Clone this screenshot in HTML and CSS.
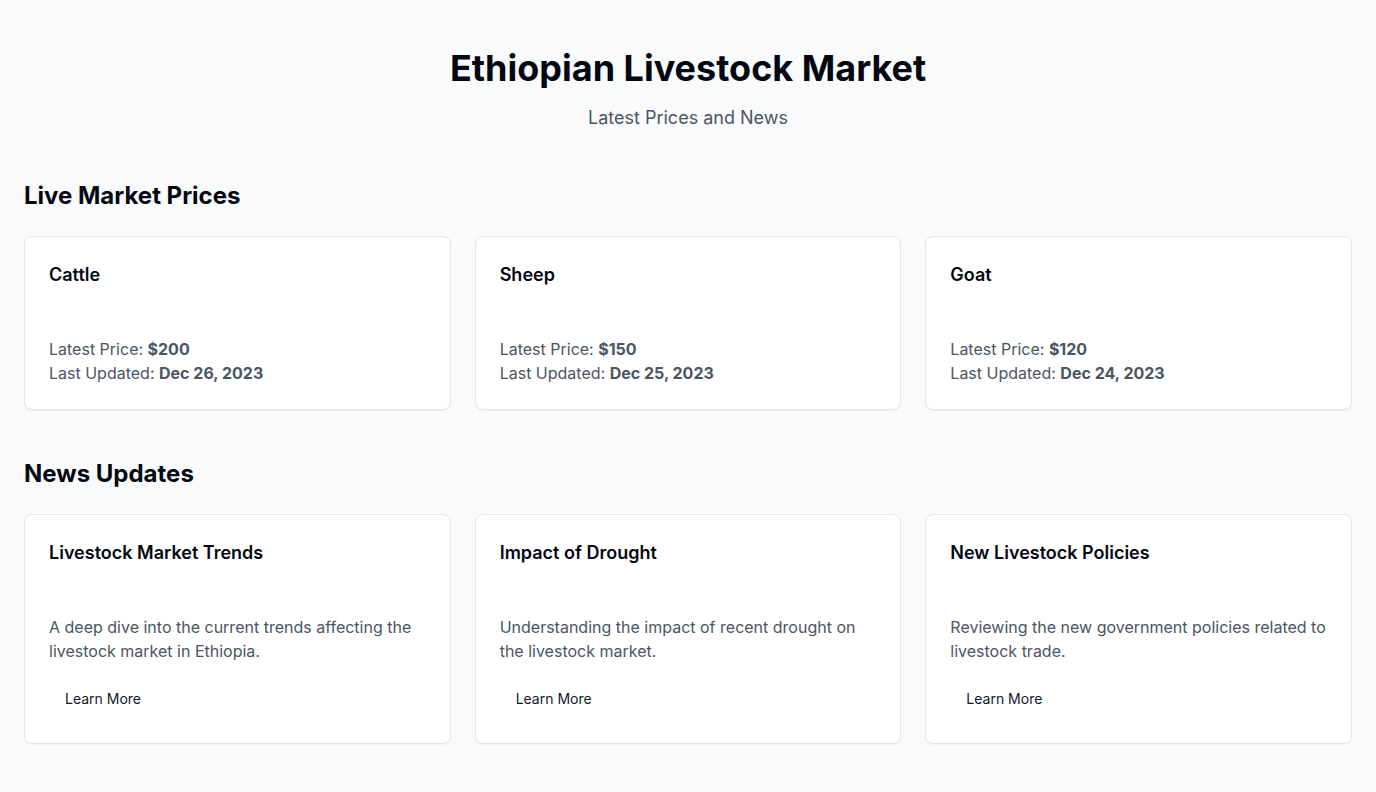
FILE: index.html
```html
<!DOCTYPE html>
<html lang="en">
<head>
<meta charset="utf-8">
<title>Ethiopian Livestock Market</title>
<link rel="stylesheet" href="styles.css">
</head>
<body>
<main class="page">
  <header class="hero">
    <h1 class="hero-title">Ethiopian Livestock Market</h1>
    <p class="hero-sub">Latest Prices and News</p>
  </header>

  <section class="section">
    <h2 class="section-title">Live Market Prices</h2>
    <div class="grid">
      <div class="card">
        <h3 class="card-title">Cattle</h3>
        <div class="card-body">
          <p class="line">Latest Price: <strong>$200</strong></p>
          <p class="line">Last Updated: <strong>Dec 26, 2023</strong></p>
        </div>
      </div>
      <div class="card">
        <h3 class="card-title">Sheep</h3>
        <div class="card-body">
          <p class="line">Latest Price: <strong>$150</strong></p>
          <p class="line">Last Updated: <strong>Dec 25, 2023</strong></p>
        </div>
      </div>
      <div class="card">
        <h3 class="card-title">Goat</h3>
        <div class="card-body">
          <p class="line">Latest Price: <strong>$120</strong></p>
          <p class="line">Last Updated: <strong>Dec 24, 2023</strong></p>
        </div>
      </div>
    </div>
  </section>

  <section class="section">
    <h2 class="section-title">News Updates</h2>
    <div class="grid">
      <div class="card">
        <h3 class="card-title">Livestock Market Trends</h3>
        <div class="card-body">
          <p class="line">A deep dive into the current trends affecting the livestock market in Ethiopia.</p>
          <button class="btn">Learn More</button>
        </div>
      </div>
      <div class="card">
        <h3 class="card-title">Impact of Drought</h3>
        <div class="card-body">
          <p class="line">Understanding the impact of recent drought on the livestock market.</p>
          <button class="btn">Learn More</button>
        </div>
      </div>
      <div class="card">
        <h3 class="card-title">New Livestock Policies</h3>
        <div class="card-body">
          <p class="line">Reviewing the new government policies related to livestock trade.</p>
          <button class="btn">Learn More</button>
        </div>
      </div>
    </div>
  </section>
</main>
</body>
</html>
```

FILE: styles.css
```css
* { box-sizing: border-box; }
html, body { margin: 0; padding: 0; }
body {
  background: #f9fafb;
  font-family: Inter, "Noto Sans", "Liberation Sans", sans-serif;
  color: #030712;
}
.page {
  padding: 48px 24px 48px;
}
.hero {
  text-align: center;
  margin-bottom: 48px;
}
.hero-title {
  margin: 0 0 16px;
  font-size: 36px;
  line-height: 40px;
  font-weight: 700;
  color: #030712;
}
.hero-sub {
  margin: 0;
  font-size: 18px;
  line-height: 28px;
  color: #4b5563;
}
.section { margin-bottom: 48px; }
.section-title {
  margin: 0 0 24px;
  font-size: 24px;
  line-height: 32px;
  font-weight: 700;
  color: #030712;
}
.grid {
  display: grid;
  grid-template-columns: repeat(3, 1fr);
  gap: 24px;
}
.card {
  background: #ffffff;
  border: 1px solid #e5e7eb;
  border-radius: 8px;
  box-shadow: 0 1px 2px rgba(0,0,0,0.05);
  padding: 24px;
}
.card-title {
  margin: 0 0 48px;
  font-size: 18px;
  line-height: 28px;
  font-weight: 600;
  color: #030712;
}
.card-body { display: flex; flex-direction: column; align-items: flex-start; }
.line {
  margin: 0;
  font-size: 16px;
  line-height: 24px;
  color: #4b5563;
}
.line strong { font-weight: 700; }
.btn {
  margin: 15px 0 1px;
  height: 40px;
  padding: 0 16px;
  border: none;
  background: transparent;
  border-radius: 6px;
  font-family: inherit;
  font-size: 14px;
  font-weight: 400;
  color: #111827;
  cursor: pointer;
}
```
